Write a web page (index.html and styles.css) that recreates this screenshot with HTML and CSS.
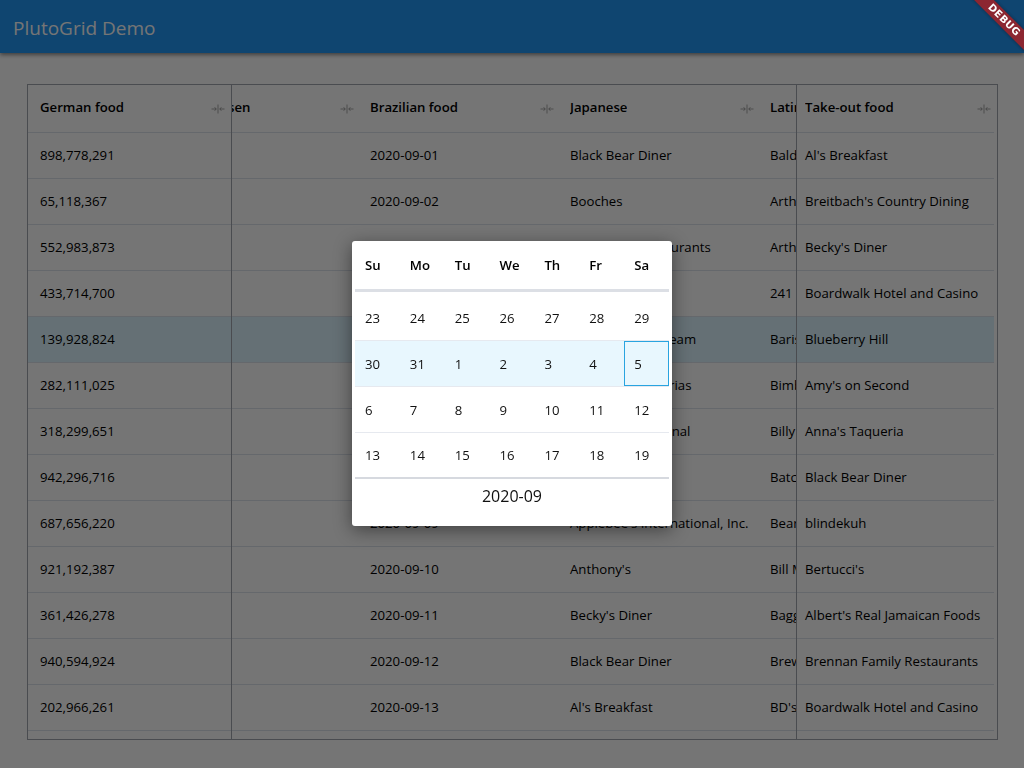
FILE: index.html
```html
<!DOCTYPE html>
<html lang="en">
<head>
<meta charset="utf-8">
<title>PlutoGrid Demo</title>
<link rel="stylesheet" href="styles.css">
</head>
<body>
<header class="appbar"><h1 class="title">PlutoGrid Demo</h1></header>
<main class="content">
  <div class="grid">
    <section class="frozen-left">
      <div class="hrow">
        <div class="hcell wide"><span class="htitle">German food</span><svg class="resize" viewBox="0 0 16 12" width="16" height="12"><path d="M8 1.5v9M1.5 6h4.5M4.6 4.2 6.4 6 4.6 7.8M14.5 6H10M11.4 4.2 9.6 6l1.8 1.8"/></svg></div>
      </div>
      <div class="row"><div class="cell wide">898,778,291</div></div>
      <div class="row"><div class="cell wide">65,118,367</div></div>
      <div class="row"><div class="cell wide">552,983,873</div></div>
      <div class="row"><div class="cell wide">433,714,700</div></div>
      <div class="row active"><div class="cell wide">139,928,824</div></div>
      <div class="row"><div class="cell wide">282,111,025</div></div>
      <div class="row"><div class="cell wide">318,299,651</div></div>
      <div class="row"><div class="cell wide">942,296,716</div></div>
      <div class="row"><div class="cell wide">687,656,220</div></div>
      <div class="row"><div class="cell wide">921,192,387</div></div>
      <div class="row"><div class="cell wide">361,426,278</div></div>
      <div class="row"><div class="cell wide">940,594,924</div></div>
      <div class="row"><div class="cell wide">202,966,261</div></div>
      <div class="row"><div class="cell wide">574,320,118</div></div>
    </section>
    <section class="scroll">
      <div class="track">
        <div class="hrow">
          <div class="hcell"><span class="htitle">Delicatessen</span><svg class="resize" viewBox="0 0 16 12" width="16" height="12"><path d="M8 1.5v9M1.5 6h4.5M4.6 4.2 6.4 6 4.6 7.8M14.5 6H10M11.4 4.2 9.6 6l1.8 1.8"/></svg></div>
          <div class="hcell"><span class="htitle">Brazilian food</span><svg class="resize" viewBox="0 0 16 12" width="16" height="12"><path d="M8 1.5v9M1.5 6h4.5M4.6 4.2 6.4 6 4.6 7.8M14.5 6H10M11.4 4.2 9.6 6l1.8 1.8"/></svg></div>
          <div class="hcell"><span class="htitle">Japanese</span><svg class="resize" viewBox="0 0 16 12" width="16" height="12"><path d="M8 1.5v9M1.5 6h4.5M4.6 4.2 6.4 6 4.6 7.8M14.5 6H10M11.4 4.2 9.6 6l1.8 1.8"/></svg></div>
          <div class="hcell"><span class="htitle">Latin American</span><svg class="resize" viewBox="0 0 16 12" width="16" height="12"><path d="M8 1.5v9M1.5 6h4.5M4.6 4.2 6.4 6 4.6 7.8M14.5 6H10M11.4 4.2 9.6 6l1.8 1.8"/></svg></div>
        </div>
        <div class="row"><div class="cell"></div><div class="cell">2020-09-01</div><div class="cell">Black Bear Diner</div><div class="cell">Baldwin's</div></div>
        <div class="row"><div class="cell"></div><div class="cell">2020-09-02</div><div class="cell">Booches</div><div class="cell">Arthur Bryant's</div></div>
        <div class="row"><div class="cell"></div><div class="cell">2020-09-03</div><div class="cell">Bob Evans Restaurants</div><div class="cell">Arthur Treacher's</div></div>
        <div class="row"><div class="cell"></div><div class="cell">2020-09-04</div><div class="cell">Benihana</div><div class="cell">241 Pizza</div></div>
        <div class="row active"><div class="cell"></div><div class="cell">2020-09-05</div><div class="cell">Brigham's Ice Cream</div><div class="cell">Barista Parlor</div></div>
        <div class="row"><div class="cell"></div><div class="cell">2020-09-06</div><div class="cell">Bambino's Pizzerias</div><div class="cell">Bimbo's Cantina</div></div>
        <div class="row"><div class="cell"></div><div class="cell">2020-09-07</div><div class="cell">Arby's International</div><div class="cell">Billy Goat Tavern</div></div>
        <div class="row"><div class="cell"></div><div class="cell">2020-09-08</div><div class="cell">Big Boy</div><div class="cell">Batch Bakery</div></div>
        <div class="row"><div class="cell"></div><div class="cell">2020-09-09</div><div class="cell">Applebee's International, Inc.</div><div class="cell">Bear Flag</div></div>
        <div class="row"><div class="cell"></div><div class="cell">2020-09-10</div><div class="cell">Anthony's</div><div class="cell">Bill Miller Bar-B-Q</div></div>
        <div class="row"><div class="cell"></div><div class="cell">2020-09-11</div><div class="cell">Becky's Diner</div><div class="cell">Bagger Dave's</div></div>
        <div class="row"><div class="cell"></div><div class="cell">2020-09-12</div><div class="cell">Black Bear Diner</div><div class="cell">Brewburgers</div></div>
        <div class="row"><div class="cell"></div><div class="cell">2020-09-13</div><div class="cell">Al's Breakfast</div><div class="cell">BD's Mongolian Barbeque</div></div>
        <div class="row"><div class="cell"></div><div class="cell">2020-09-14</div><div class="cell">Blimpie</div><div class="cell">Bahama Breeze</div></div>
      </div>
    </section>
    <section class="frozen-right">
      <div class="hrow">
        <div class="hcell wide-r"><span class="htitle">Take-out food</span><svg class="resize" viewBox="0 0 16 12" width="16" height="12"><path d="M8 1.5v9M1.5 6h4.5M4.6 4.2 6.4 6 4.6 7.8M14.5 6H10M11.4 4.2 9.6 6l1.8 1.8"/></svg></div>
      </div>
      <div class="row"><div class="cell wide-r">Al's Breakfast</div></div>
      <div class="row"><div class="cell wide-r">Breitbach's Country Dining</div></div>
      <div class="row"><div class="cell wide-r">Becky's Diner</div></div>
      <div class="row"><div class="cell wide-r">Boardwalk Hotel and Casino</div></div>
      <div class="row active"><div class="cell wide-r">Blueberry Hill</div></div>
      <div class="row"><div class="cell wide-r">Amy's on Second</div></div>
      <div class="row"><div class="cell wide-r">Anna's Taqueria</div></div>
      <div class="row"><div class="cell wide-r">Black Bear Diner</div></div>
      <div class="row"><div class="cell wide-r">blindekuh</div></div>
      <div class="row"><div class="cell wide-r">Bertucci's</div></div>
      <div class="row"><div class="cell wide-r">Albert's Real Jamaican Foods</div></div>
      <div class="row"><div class="cell wide-r">Brennan Family Restaurants</div></div>
      <div class="row"><div class="cell wide-r">Boardwalk Hotel and Casino</div></div>
      <div class="row"><div class="cell wide-r">Big Town Hero</div></div>
    </section>
  </div>
</main>

<div class="barrier"></div>

<div class="picker">
  <div class="picker-head">
    <div class="dname">Su</div><div class="dname">Mo</div><div class="dname">Tu</div><div class="dname">We</div><div class="dname">Th</div><div class="dname">Fr</div><div class="dname">Sa</div>
  </div>
  <div class="picker-row">
    <div class="day">23</div><div class="day">24</div><div class="day">25</div><div class="day">26</div><div class="day">27</div><div class="day">28</div><div class="day">29</div>
  </div>
  <div class="picker-row active">
    <div class="day">30</div><div class="day">31</div><div class="day">1</div><div class="day">2</div><div class="day">3</div><div class="day">4</div><div class="day selected">5</div>
  </div>
  <div class="picker-row">
    <div class="day">6</div><div class="day">7</div><div class="day">8</div><div class="day">9</div><div class="day">10</div><div class="day">11</div><div class="day">12</div>
  </div>
  <div class="picker-row last">
    <div class="day">13</div><div class="day">14</div><div class="day">15</div><div class="day">16</div><div class="day">17</div><div class="day">18</div><div class="day">19</div>
  </div>
  <div class="picker-foot">2020-09</div>
</div>

<div class="debug-wrap"><div class="debug">DEBUG</div></div>
</body>
</html>
```

FILE: styles.css
```css
* { box-sizing: border-box; }

html, body {
  margin: 0;
  padding: 0;
}

body {
  width: 1024px;
  height: 768px;
  overflow: hidden;
  background: #ffffff;
  font-family: "Open Sans", "Noto Sans", sans-serif;
  font-size: 13.2px;
  color: #000;
}

/* App bar */
.appbar {
  height: 53px;
  background: #2196F3;
  box-shadow: 0 2px 4px rgba(0, 0, 0, 0.45);
  display: flex;
  align-items: center;
  padding: 2px 0 0 13px;
  position: relative;
  z-index: 1;
}

.title {
  margin: 0;
  font-size: 19px;
  font-weight: 400;
  color: #ffffff;
}

/* Content */
.content {
  padding: 31px 0 0 27px;
}

.grid {
  width: 971px;
  height: 656px;
  border: 1px solid #A1A5AE;
  display: flex;
  overflow: hidden;
  background: #fff;
}

.frozen-left {
  flex: none;
  width: 204px;
  border-right: 1px solid #A1A5AE;
  overflow: hidden;
}

.scroll {
  flex: 1;
  min-width: 0;
  overflow: hidden;
}

.track {
  width: 800px;
  margin-left: -72px;
}

.frozen-right {
  flex: none;
  width: 201px;
  border-left: 1px solid #A1A5AE;
  padding-right: 3px;
  overflow: hidden;
}

.hrow {
  height: 48px;
  display: flex;
  border-bottom: 1px solid #DDE2EB;
}

.row {
  height: 46px;
  display: flex;
  border-bottom: 1px solid #DDE2EB;
}

.row.active {
  background: #DCF5FF;
}

.hcell {
  flex: none;
  width: 200px;
  display: flex;
  align-items: center;
  justify-content: space-between;
  padding: 0 5px 3px 10px;
  white-space: nowrap;
  overflow: hidden;
}

.htitle {
  font-weight: 600;
  overflow: hidden;
}

.resize {
  flex: none;
  margin-top: 3px;
  fill: none;
  stroke: rgba(0, 0, 0, 0.34);
  stroke-width: 1;
}

.cell {
  flex: none;
  width: 200px;
  display: flex;
  align-items: center;
  padding: 0 0 2px 10px;
  white-space: nowrap;
  overflow: hidden;
}

.hcell.wide,
.cell.wide {
  width: 203px;
  padding-left: 12px;
}

.hcell.wide-r,
.cell.wide-r {
  width: 197px;
  padding-left: 8px;
}

.hcell.wide-r {
  padding-right: 2px;
}

/* Modal barrier */
.barrier {
  position: fixed;
  inset: 0;
  background: rgba(0, 0, 0, 0.54);
  z-index: 5;
}

/* Date picker popup */
.picker {
  position: absolute;
  left: 352px;
  top: 241px;
  width: 320px;
  padding: 3px;
  background: #ffffff;
  border-radius: 3px;
  box-shadow: 0 4px 18px rgba(0, 0, 0, 0.45);
  z-index: 6;
}

.picker-head {
  display: grid;
  grid-template-columns: repeat(7, 1fr);
  height: 48px;
  padding-bottom: 3px;
  border-bottom: 3px solid #DCDFE5;
  margin-bottom: 3px;
}

.dname {
  display: flex;
  align-items: center;
  padding-left: 10px;
  font-weight: 600;
}

.picker-row {
  display: grid;
  grid-template-columns: repeat(7, 1fr);
  height: 46px;
  border-bottom: 1px solid #E6E9EF;
}

.picker-row.active {
  background: #E8F7FE;
}

.picker-row.last {
  border-bottom: 2px solid #D6D9DF;
}

.day {
  display: flex;
  align-items: center;
  padding-left: 10px;
  color: #111;
}

.day.selected {
  box-shadow: inset 0 0 0 1px #29A4E0;
}

.picker-foot {
  height: 44px;
  line-height: 34px;
  text-align: center;
  font-size: 16px;
  color: #111;
}

/* Debug banner */
.debug-wrap {
  position: fixed;
  top: 0;
  right: 0;
  width: 60px;
  height: 60px;
  overflow: hidden;
  z-index: 10;
}

.debug {
  position: absolute;
  left: -2px;
  top: 13px;
  width: 84px;
  height: 14px;
  transform: rotate(45deg);
  background: rgba(183, 28, 28, 0.75);
  box-shadow: 0 0 4px rgba(0, 0, 0, 0.35);
  color: #ffffff;
  font-family: "DejaVu Sans", sans-serif;
  font-size: 10px;
  font-weight: 700;
  line-height: 14px;
  letter-spacing: 0.3px;
  text-align: center;
}
```
